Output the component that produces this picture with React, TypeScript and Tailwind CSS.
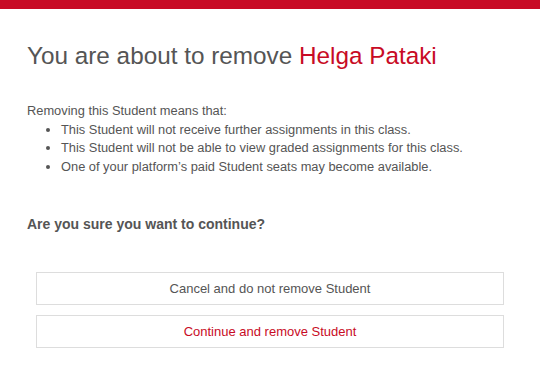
export default function App() {
  const items = [
    "This Student will not receive further assignments in this class.",
    "This Student will not be able to view graded assignments for this class.",
    "One of your platform’s paid Student seats may become available.",
  ];

  return (
    <div className="w-[540px] h-[375px] bg-white font-['Liberation_Sans',Arial,sans-serif] text-[#555555]">
      <div className="h-[9px] bg-[#c80b25]" />

      <div className="pl-[27px]">
        <h1 className="mt-[33px] text-[24.3px] leading-[28px] text-[#555555]">
          You are about to remove{" "}
          <span className="text-[#c80b25]">Helga Pataki</span>
        </h1>

        <div className="mt-[32px] text-[12.85px] leading-[18.5px]">
          <p>Removing this Student means that:</p>
          <ul className="list-disc pl-[34px]">
            {items.map((item) => (
              <li key={item}>{item}</li>
            ))}
          </ul>
        </div>

        <p className="mt-[38px] text-[14px] leading-[20px] font-bold">
          Are you sure you want to continue?
        </p>
      </div>

      <div className="mt-[38px] mx-[36px] flex flex-col gap-[10px]">
        <button className="h-[33px] border border-[#dddddd] bg-white text-[13px] text-[#555555]">
          Cancel and do not remove Student
        </button>
        <button className="h-[33px] border border-[#dddddd] bg-white text-[13px] text-[#c80b25]">
          Continue and remove Student
        </button>
      </div>
    </div>
  );
}
